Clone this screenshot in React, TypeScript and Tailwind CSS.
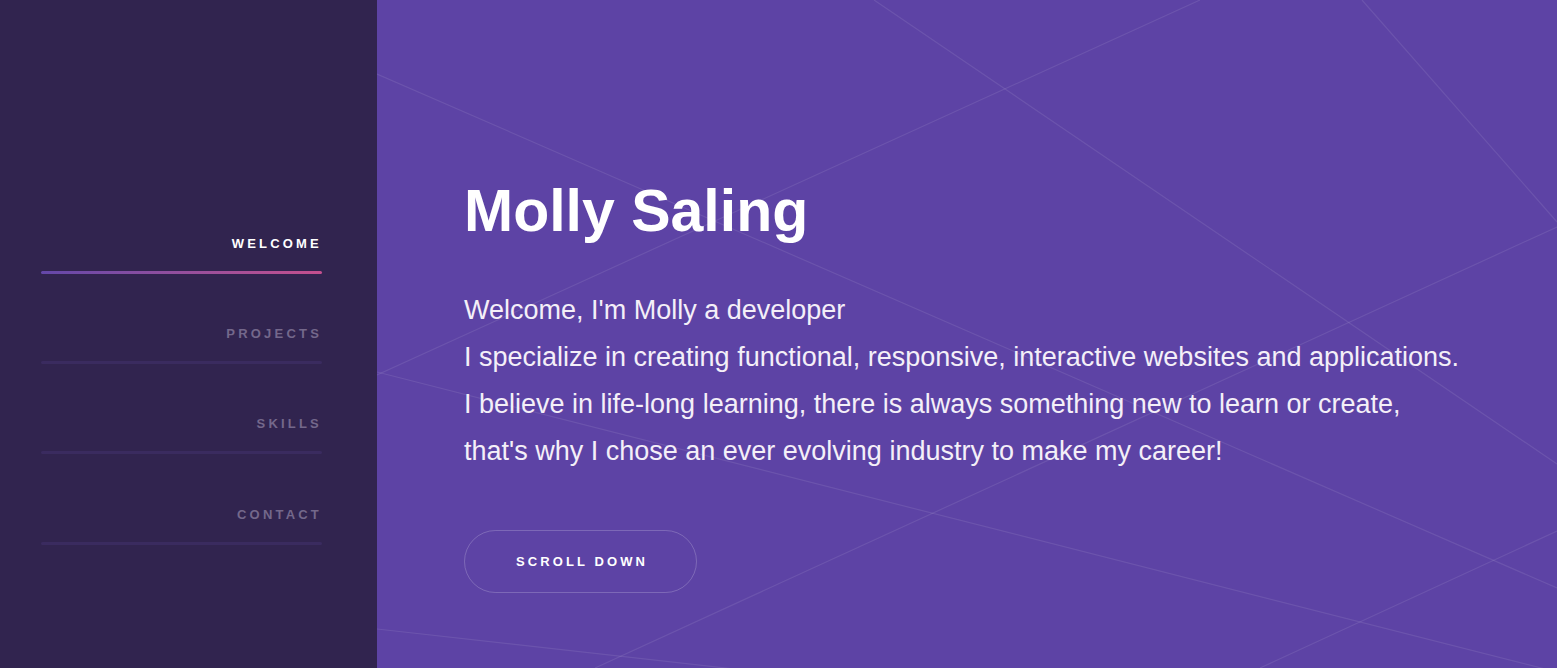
const navItems = [
  { label: "WELCOME", active: true },
  { label: "PROJECTS", active: false },
  { label: "SKILLS", active: false },
  { label: "CONTACT", active: false },
];

// background lines, in main-panel pixel coords (1180 x 668)
const lines = [
  [0, 74, 1180, 588],
  [497, 0, 1180, 464],
  [823, 0, 0, 375],
  [0, 372, 1180, 672],
  [985, 0, 1180, 222],
  [1180, 227, 218, 668],
  [0, 629, 420, 676],
  [1180, 531, 883, 668],
];

export default function App() {
  return (
    <div className="flex h-[668px] w-full overflow-hidden font-['Liberation_Sans',Arial,sans-serif]">
      {/* SIDEBAR */}
      <aside className="w-[377px] shrink-0 bg-[#31244f] pt-[236px]">
        <nav className="ml-[41px] flex w-[281px] flex-col">
          {navItems.map((item, i) => (
            <div
              key={item.label}
              className={i === 0 ? "" : i === 3 ? "mt-[53px]" : "mt-[52px]"}
            >
              <a
                className={`block text-right text-[13px] font-bold leading-[16px] tracking-[3.2px] ${
                  item.active ? "text-white" : "text-[#74688b]"
                }`}
              >
                {item.label}
              </a>
              <div
                className={`mt-[19px] h-[3px] rounded-full ${
                  item.active
                    ? "bg-gradient-to-r from-[#6447a9] to-[#c44f8e]"
                    : "bg-[#3a2b5f]"
                }`}
              />
            </div>
          ))}
        </nav>
      </aside>

      {/* MAIN */}
      <main className="relative flex-1 bg-[#5d43a5] pl-[87px] pt-[181px]">
        <svg
          className="pointer-events-none absolute inset-0 h-full w-full"
          width="1180"
          height="668"
        >
          {lines.map(([x1, y1, x2, y2], i) => (
            <line
              key={i}
              x1={x1}
              y1={y1}
              x2={x2}
              y2={y2}
              stroke="rgba(255,255,255,0.09)"
              strokeWidth="1.2"
            />
          ))}
        </svg>

        <div className="relative">
          <h1 className="text-[59px] font-bold leading-[60px] text-white">
            Molly Saling
          </h1>
          <div className="mt-[46px] text-[27px] leading-[47px] text-[#f4eff8]">
            <p>Welcome, I'm Molly a developer</p>
            <p>
              I specialize in creating functional, responsive, interactive
              websites and applications.
            </p>
            <p>
              I believe in life-long learning, there is always something new to
              learn or create,
            </p>
            <p>that's why I chose an ever evolving industry to make my career!</p>
          </div>
          <button className="mt-[55px] flex h-[63px] w-[233px] items-center justify-center rounded-full border border-white/20 pl-[3px] text-[13px] font-bold tracking-[3.1px] text-white">
            SCROLL DOWN
          </button>
        </div>
      </main>
    </div>
  );
}
